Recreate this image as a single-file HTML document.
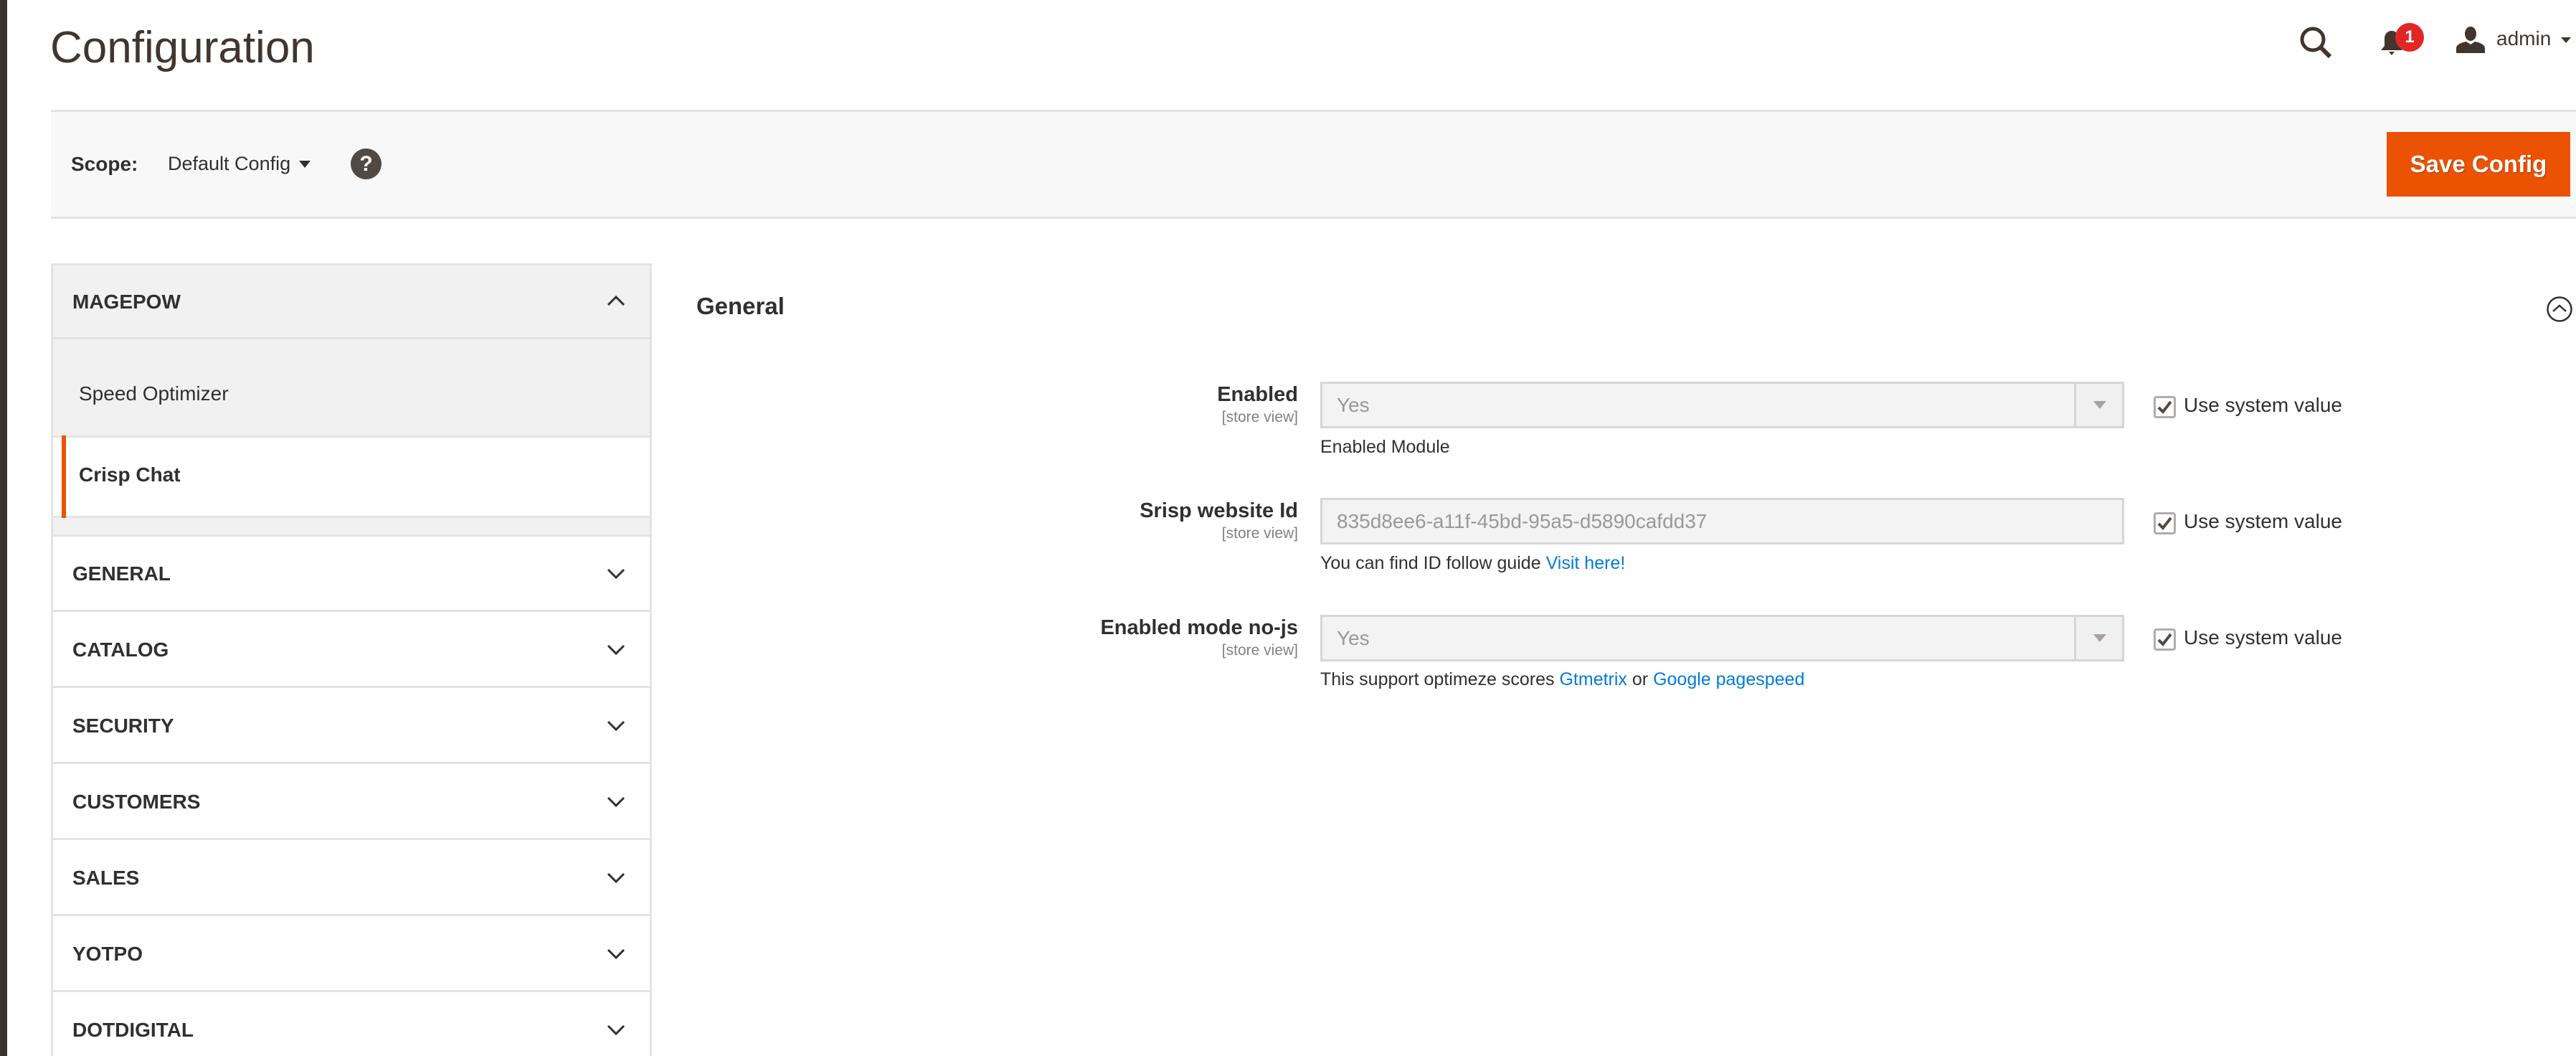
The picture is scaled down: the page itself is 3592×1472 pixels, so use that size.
<!DOCTYPE html>
<html><head><meta charset="utf-8"><style>
*{margin:0;padding:0;box-sizing:border-box}
html,body{width:3592px;height:1472px;overflow:hidden}
body{background:#fff;font-family:"Liberation Sans",sans-serif;color:#303030;position:relative}
.a{position:absolute}
.lbar{left:0;top:0;width:10px;height:1472px;background:#373330}
.title{left:70px;top:31px;font-size:62px;color:#41362f;white-space:nowrap}
.scope{left:71px;top:153px;width:3521px;height:152px;background:#f8f8f8;border-top:3px solid #e3e3e3;border-bottom:3px solid #e3e3e3}
.side{left:71px;width:838px;border:3px solid #e3e3e3;border-top:none}
.sideitem{font-weight:bold;font-size:28px;color:#303030}
.lab{font-size:29px;font-weight:bold;text-align:right;width:600px;white-space:nowrap}
.sv{font-size:21px;color:#808080;text-align:right;width:600px}
.sel{left:1841px;width:1121px;height:65px;background:#f3f3f3;border:3px solid #d6d6d6;font-size:28px;color:#999;padding-left:20px;line-height:59px}
.dd{position:absolute;right:0;top:0;width:67px;height:59px;border-left:3px solid #d6d6d6;background:#f0f0f0}
.dd:after{content:"";position:absolute;left:24px;top:24px;border-left:9px solid transparent;border-right:9px solid transparent;border-top:11px solid #a8a29e}
.cb{left:3003px;width:31px;height:31px;border:3px solid #adadad;border-radius:4px;background:#fff}
.usv{left:3045px;font-size:28px;white-space:nowrap}
.note{left:1841px;font-size:25px;white-space:nowrap}
.note a{color:#007bdb;text-decoration:none}
</style></head><body>
<div class="a lbar"></div>
<div class="a title">Configuration</div>

<svg class="a" style="left:3205px;top:36px" width="50" height="46" viewBox="0 0 50 46"><circle cx="20" cy="19" r="15" fill="none" stroke="#41362f" stroke-width="5"/><line x1="31" y1="30" x2="44" y2="43" stroke="#41362f" stroke-width="6"/></svg>
<svg class="a" style="left:3318px;top:40px" width="34" height="38" viewBox="0 0 34 38"><path d="M17 3c-6 0-10 5-10 11v10l-5 6h30l-5-6V14C27 8 23 3 17 3z" fill="#41362f"/><path d="M13 32h8l-4 5z" fill="#41362f"/></svg>
<div class="a" style="left:3340px;top:32px;width:40px;height:40px;border-radius:50%;background:#e22626;color:#fff;font-weight:bold;font-size:24px;text-align:center;line-height:40px">1</div>
<svg class="a" style="left:3425px;top:36px" width="40" height="38" viewBox="0 0 40 38"><ellipse cx="20" cy="11" rx="8" ry="10" fill="#41362f"/><path d="M0 38v-7c0-5 8-8 14-9l6 4 6-4c6 1 14 4 14 9v7z" fill="#41362f"/></svg>
<div class="a" style="left:3481px;top:38px;font-size:28px;color:#41362f">admin</div>
<div class="a" style="left:3571px;top:52px;border-left:7px solid transparent;border-right:7px solid transparent;border-top:8px solid #41362f"></div>

<div class="a scope"></div>
<div class="a" style="left:99px;top:213px;font-size:28px;font-weight:bold;color:#303030">Scope:</div>
<div class="a" style="left:234px;top:213px;font-size:27px;color:#303030">Default Config</div>
<div class="a" style="left:417px;top:224px;border-left:8px solid transparent;border-right:8px solid transparent;border-top:10px solid #303030"></div>
<div class="a" style="left:489px;top:207px;width:43px;height:43px;border-radius:50%;background:#514943;color:#fff;font-weight:bold;font-size:30px;text-align:center;line-height:43px">?</div>
<div class="a" style="left:3328px;top:184px;width:256px;height:90px;background:#eb5202;color:#fff;font-weight:bold;font-size:33px;text-align:center;line-height:90px;text-shadow:1px 1px 1px rgba(0,0,0,.3)">Save Config</div>

<div class="a side" style="top:367px;height:355px;background:#f1f1f1;border-top:3px solid #e3e3e3"></div>
<div class="a" style="left:71px;top:470px;width:838px;height:3px;background:#e3e3e3"></div>
<div class="a sideitem" style="left:101px;top:405px">MAGEPOW</div>
<svg class="a" style="left:845px;top:410px" width="28" height="18" viewBox="0 0 28 18"><path d="M3 15L14 4l11 11" fill="none" stroke="#303030" stroke-width="3"/></svg>
<div class="a" style="left:110px;top:533px;font-size:28px;color:#303030">Speed Optimizer</div>
<div class="a" style="left:74px;top:607px;width:832px;height:115px;background:#fff;border-top:3px solid #e3e3e3;border-bottom:3px solid #e3e3e3"></div>
<div class="a" style="left:86px;top:607px;width:6px;height:115px;background:#eb5202"></div>
<div class="a sideitem" style="left:110px;top:646px">Crisp Chat</div>
<div class="a" style="left:71px;top:722px;width:838px;height:25px;background:#f1f1f1;border-left:3px solid #e3e3e3;border-right:3px solid #e3e3e3"></div>

<div class="a" style="left:71px;top:745px;width:838px;height:727px;border:3px solid #e3e3e3;border-bottom:none;background:#fff"></div>
<div class="a" style="left:71px;top:850px;width:838px;height:3px;background:#e3e3e3"></div>
<div class="a" style="left:71px;top:956px;width:838px;height:3px;background:#e3e3e3"></div>
<div class="a" style="left:71px;top:1062px;width:838px;height:3px;background:#e3e3e3"></div>
<div class="a" style="left:71px;top:1168px;width:838px;height:3px;background:#e3e3e3"></div>
<div class="a" style="left:71px;top:1274px;width:838px;height:3px;background:#e3e3e3"></div>
<div class="a" style="left:71px;top:1380px;width:838px;height:3px;background:#e3e3e3"></div>

<div class="a sideitem" style="left:101px;top:784px">GENERAL</div>
<div class="a sideitem" style="left:101px;top:890px">CATALOG</div>
<div class="a sideitem" style="left:101px;top:996px">SECURITY</div>
<div class="a sideitem" style="left:101px;top:1102px">CUSTOMERS</div>
<div class="a sideitem" style="left:101px;top:1208px">SALES</div>
<div class="a sideitem" style="left:101px;top:1314px">YOTPO</div>
<div class="a sideitem" style="left:101px;top:1420px">DOTDIGITAL</div>
<svg class="a" style="left:845px;top:791px" width="28" height="18" viewBox="0 0 28 18"><path d="M3 3l11 11L25 3" fill="none" stroke="#303030" stroke-width="3"/></svg>
<svg class="a" style="left:845px;top:897px" width="28" height="18" viewBox="0 0 28 18"><path d="M3 3l11 11L25 3" fill="none" stroke="#303030" stroke-width="3"/></svg>
<svg class="a" style="left:845px;top:1003px" width="28" height="18" viewBox="0 0 28 18"><path d="M3 3l11 11L25 3" fill="none" stroke="#303030" stroke-width="3"/></svg>
<svg class="a" style="left:845px;top:1109px" width="28" height="18" viewBox="0 0 28 18"><path d="M3 3l11 11L25 3" fill="none" stroke="#303030" stroke-width="3"/></svg>
<svg class="a" style="left:845px;top:1215px" width="28" height="18" viewBox="0 0 28 18"><path d="M3 3l11 11L25 3" fill="none" stroke="#303030" stroke-width="3"/></svg>
<svg class="a" style="left:845px;top:1321px" width="28" height="18" viewBox="0 0 28 18"><path d="M3 3l11 11L25 3" fill="none" stroke="#303030" stroke-width="3"/></svg>
<svg class="a" style="left:845px;top:1427px" width="28" height="18" viewBox="0 0 28 18"><path d="M3 3l11 11L25 3" fill="none" stroke="#303030" stroke-width="3"/></svg>

<div class="a" style="left:971px;top:408px;font-size:33px;font-weight:bold;color:#303030">General</div>
<svg class="a" style="left:3550px;top:412px" width="38" height="38" viewBox="0 0 38 38"><circle cx="19" cy="19" r="16.5" fill="none" stroke="#303030" stroke-width="2.5"/><path d="M10 22l9-8 9 8" fill="none" stroke="#303030" stroke-width="2.5"/></svg>

<div class="a lab" style="left:1210px;top:534px">Enabled</div>
<div class="a sv" style="left:1210px;top:570px">[store view]</div>
<div class="a sel" style="top:532px">Yes<div class="dd"></div></div>
<div class="a cb" style="top:552px"><svg width="25" height="25" viewBox="0 0 25 25" style="display:block"><path d="M4 13l6 6L21 5" fill="none" stroke="#514943" stroke-width="4"/></svg></div>
<div class="a usv" style="top:549px">Use system value</div>
<div class="a note" style="top:609px">Enabled Module</div>

<div class="a lab" style="left:1210px;top:696px">Srisp website Id</div>
<div class="a sv" style="left:1210px;top:732px">[store view]</div>
<div class="a sel" style="top:694px">835d8ee6-a11f-45bd-95a5-d5890cafdd37</div>
<div class="a cb" style="top:714px"><svg width="25" height="25" viewBox="0 0 25 25" style="display:block"><path d="M4 13l6 6L21 5" fill="none" stroke="#514943" stroke-width="4"/></svg></div>
<div class="a usv" style="top:711px">Use system value</div>
<div class="a note" style="top:771px">You can find ID follow guide <a>Visit here!</a></div>

<div class="a lab" style="left:1210px;top:859px">Enabled mode no-js</div>
<div class="a sv" style="left:1210px;top:895px">[store view]</div>
<div class="a sel" style="top:857px">Yes<div class="dd"></div></div>
<div class="a cb" style="top:876px"><svg width="25" height="25" viewBox="0 0 25 25" style="display:block"><path d="M4 13l6 6L21 5" fill="none" stroke="#514943" stroke-width="4"/></svg></div>
<div class="a usv" style="top:873px">Use system value</div>
<div class="a note" style="top:933px">This support optimeze scores <a>Gtmetrix</a> or <a>Google pagespeed</a></div>
</body></html>
